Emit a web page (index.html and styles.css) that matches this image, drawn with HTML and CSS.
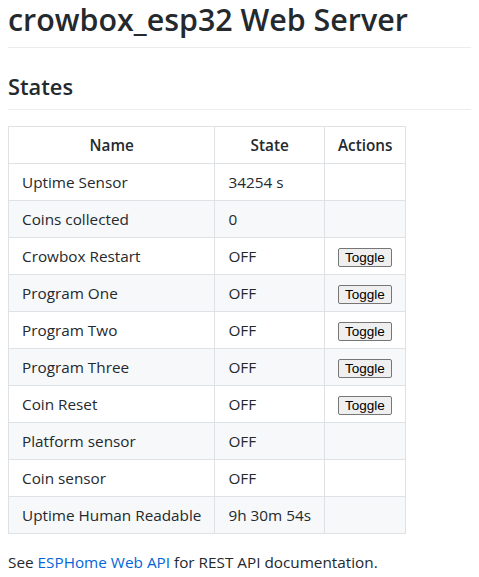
FILE: index.html
```html
<!DOCTYPE html>
<html>
<head>
<meta charset="utf-8">
<title>crowbox_esp32 Web Server</title>
<link rel="stylesheet" href="styles.css">
</head>
<body>
<article class="markdown-body">
  <h1 class="title">crowbox_esp32 Web Server</h1>
  <h2 class="section">States</h2>
  <table class="states">
    <thead>
      <tr><th>Name</th><th>State</th><th>Actions</th></tr>
    </thead>
    <tbody>
      <tr><td>Uptime Sensor</td><td>34254 s</td><td></td></tr>
      <tr><td>Coins collected</td><td>0</td><td></td></tr>
      <tr><td>Crowbox Restart</td><td>OFF</td><td><button class="btn">Toggle</button></td></tr>
      <tr><td>Program One</td><td>OFF</td><td><button class="btn">Toggle</button></td></tr>
      <tr><td>Program Two</td><td>OFF</td><td><button class="btn">Toggle</button></td></tr>
      <tr><td>Program Three</td><td>OFF</td><td><button class="btn">Toggle</button></td></tr>
      <tr><td>Coin Reset</td><td>OFF</td><td><button class="btn">Toggle</button></td></tr>
      <tr><td>Platform sensor</td><td>OFF</td><td></td></tr>
      <tr><td>Coin sensor</td><td>OFF</td><td></td></tr>
      <tr><td>Uptime Human Readable</td><td>9h 30m 54s</td><td></td></tr>
    </tbody>
  </table>
  <p class="footer">See <a href="#">ESPHome Web API</a> for REST API documentation.</p>
</article>
</body>
</html>
```

FILE: styles.css
```css
html, body {
  margin: 0;
  padding: 0;
  background: #ffffff;
}

body {
  padding: 0 8px;
  font-family: "Open Sans", "Noto Sans", sans-serif;
  font-size: 15.3px;
  line-height: 24px;
  color: #24292e;
}

.title {
  margin: 0 0 24px 0;
  padding-top: 1px;
  font-size: 30.4px;
  font-weight: 600;
  line-height: 37px;
  padding-bottom: 9px;
  border-bottom: 1px solid #eaecef;
}

.section {
  margin: 0 0 16px 0;
  font-size: 21.8px;
  font-weight: 600;
  line-height: 30px;
  padding-bottom: 7px;
  border-bottom: 1px solid #eaecef;
}

.states {
  border-collapse: collapse;
  border-spacing: 0;
}

.states th,
.states td {
  border: 1px solid #dfe2e5;
  padding: 6px 13px;
  height: 24px;
}

.states th {
  font-weight: 600;
  text-align: center;
}

.states td {
  text-align: left;
}

.states tbody tr:nth-child(even) {
  background: #f6f8fa;
}

.btn {
  font-family: "Liberation Sans", Arial, sans-serif;
  font-size: 13.5px;
  line-height: 15px;
  color: #000;
  background: #efefef;
  border: 1px solid #767676;
  border-radius: 2px;
  padding: 1px 6px;
  margin: 0;
  vertical-align: middle;
}

.footer {
  margin: 16px 0 0 0;
}

.footer a {
  color: #0366d6;
  text-decoration: none;
}
```
